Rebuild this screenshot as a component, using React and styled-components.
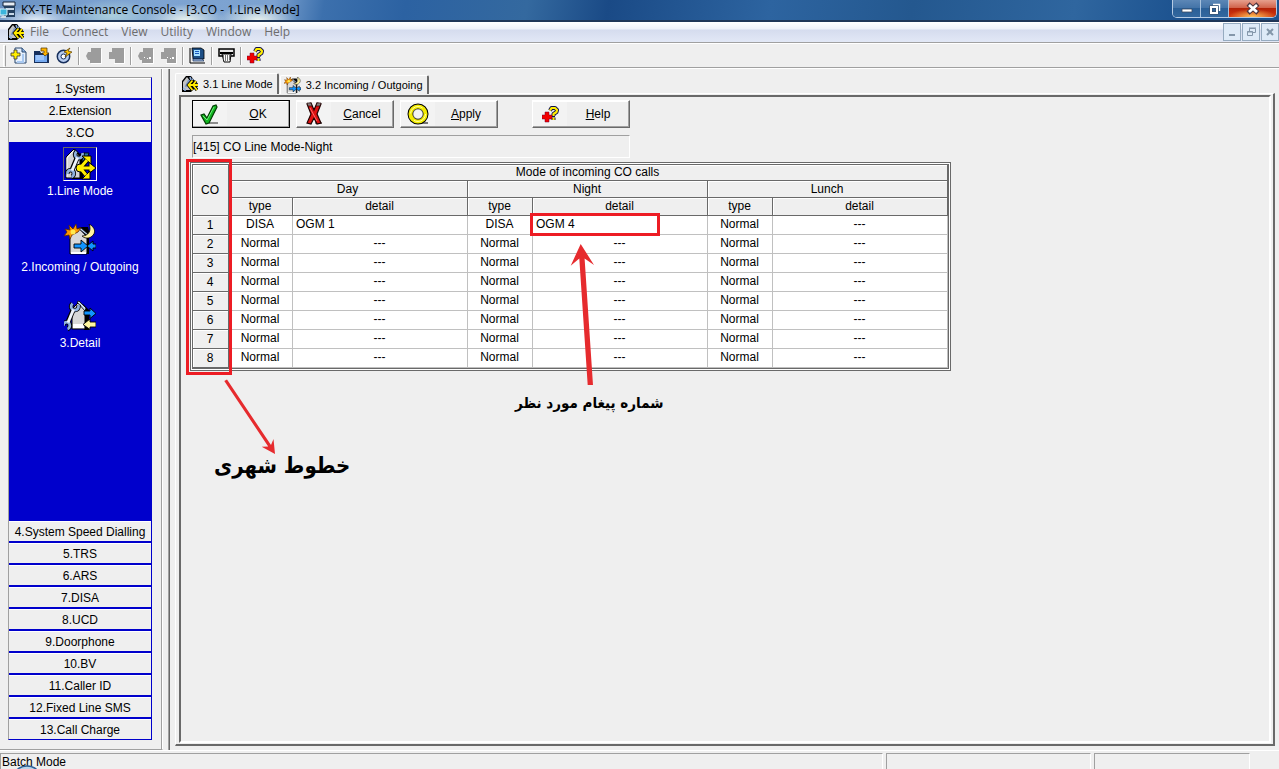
import React from 'react';
import styled, { createGlobalStyle, css } from 'styled-components';

const FACE = '#efefef';
const DARK = '#696969';
const MID = '#a0a0a0';
const BLUE = '#0000cc';
const RED = '#ed1c24';

const Global = createGlobalStyle`
  * { box-sizing: border-box; }
  body { margin: 0; background: ${FACE}; color: #000; font: 12px/16px "Liberation Sans", Arial, sans-serif; }
  button, input { font: inherit; color: inherit; margin: 0; border-radius: 0; }
`;

const Window = styled.div`
  display: flex;
  flex-direction: column;
  height: 100vh;
  overflow: hidden;
`;

/* ---------- title bar ---------- */
const TitleBar = styled.header`
  display: flex;
  align-items: center;
  flex: none;
  height: 22px;
  padding-right: 2px;
  font: 12px/20px "Open Sans", "Noto Sans", sans-serif;
  border-bottom: 2px solid #1f3657;
  background:
    radial-gradient(ellipse 40px 14px at 36px 20px, rgba(240, 246, 252, 0.9), transparent),
    radial-gradient(ellipse 50px 16px at 112px 16px, rgba(190, 225, 225, 0.7), transparent),
    radial-gradient(ellipse 40px 16px at 185px 20px, rgba(244, 250, 240, 0.9), transparent),
    radial-gradient(ellipse 40px 16px at 258px 20px, rgba(244, 250, 240, 0.9), transparent),
    linear-gradient(100deg, #6a92c4 0, #7ea4d2 120px, #7ca2d0 270px, #3c70ad 320px, #2c62a2 400px, #34699f 520px, #1a4a86 600px, #2d64a0 760px, #24588f 900px, #2f669f 1060px, #1d5390 1160px);
`;
const TitleText = styled.h1`
  flex: 1;
  margin: 0 0 0 5px;
  font: inherit;
`;
const Captions = styled.div`
  display: flex;
  align-self: flex-start;
  height: 18px;
  border: 1px solid #b5cbe4;
  border-top: 0;
  border-radius: 0 0 5px 5px;
  overflow: hidden;
`;
const CaptionButton = styled.button`
  display: flex;
  align-items: center;
  justify-content: center;
  width: ${p => (p.$close ? 47 : 28)}px;
  padding: 0;
  border: 0;
  border-right: ${p => (p.$close ? 0 : 1)}px solid #a9c3de;
  background: ${p => (p.$close
    ? 'radial-gradient(ellipse 24px 8px at 50% 100%, #ffc45a, transparent), linear-gradient(#e6a08e, #d1644c 45%, #b32208 50%, #d4380f)'
    : 'linear-gradient(#5c87b6, #4474a8 45%, #2a5f97 50%, #33689f)')};
`;

/* ---------- menu bar ---------- */
const MenuBar = styled.nav`
  display: flex;
  align-items: center;
  flex: none;
  height: 21px;
  padding-left: 7px;
  font: 12px/18px "Open Sans", "Noto Sans", sans-serif;
  color: #6d6d6d;
  border-bottom: 1px solid ${MID};
  background: linear-gradient(#ffffff, #eef1f9 35%, #d5dcee 40%, #e2e8f6);
`;
const MenuItem = styled.button`
  padding: 0 7px 0 6px;
  border: 0;
  background: none;
`;
const MdiButtons = styled.div`
  display: flex;
  gap: 1px;
  margin-left: auto;
`;
const MdiButton = styled.button`
  display: flex;
  align-items: center;
  justify-content: center;
  width: 18px;
  height: 18px;
  padding: 0;
  border: 1px solid #96abc0;
  background: #deeaf7;
`;

/* ---------- tool bar ---------- */
const ToolBar = styled.div`
  display: flex;
  align-items: center;
  flex: none;
  height: 25px;
  border-top: 1px solid #fff;
  border-bottom: 1px solid ${MID};
  box-shadow: 0 1px 0 #fff;
`;
const Grip = styled.span`
  width: 3px;
  height: 22px;
  margin: 0 1px 0 3px;
  border: 1px solid #fff;
  border-right-color: ${MID};
`;
const ToolButton = styled.button`
  display: flex;
  align-items: center;
  justify-content: center;
  width: 23px;
  height: 22px;
  padding: 0;
  border: 0;
  background: none;
`;
const ToolSeparator = styled.span`
  width: 2px;
  height: 18px;
  margin: 0 2px;
  border-left: 1px solid ${MID};
  border-right: 1px solid #fff;
`;

/* ---------- work area ---------- */
const Work = styled.div`
  display: flex;
  flex: 1;
  min-height: 0;
  padding-top: 1px;
`;
const SidePane = styled.aside`
  display: flex;
  flex: none;
  width: 163px;
  padding: 8px 9px 9px 8px;
  border-right: 1px solid #fff;
  border-bottom: 1px solid ${MID};
  box-shadow: inset -1px 0 0 ${MID};
`;
const SideMenu = styled.nav`
  display: flex;
  flex-direction: column;
  width: 144px;
  border: 1px solid ${MID};
  border-right-color: ${BLUE};
  border-bottom-color: ${BLUE};
  background: ${BLUE};
`;
const SideGroup = styled.div`
  display: grid;
  gap: 2px;
`;
const SideButton = styled.button`
  height: 20px;
  padding: 0;
  border: 0;
  border-top: 1px solid #fff;
  white-space: nowrap;
  background: ${FACE};
`;
const SideContent = styled.div`
  display: flex;
  flex-direction: column;
  flex: 1;
  align-items: center;
  gap: 22px;
  padding-top: 5px;
`;
const SideLink = styled.button`
  display: flex;
  flex-direction: column;
  align-items: center;
  padding: 0;
  border: 0;
  line-height: 20px;
  color: #fff;
  background: none;
`;
const IconFrame = styled.span`
  display: flex;
  width: 34px;
  height: 34px;
  border: 1px solid transparent;
  ${p => p.$selected && css`border-color: ${DARK} #fff #fff ${DARK};`}
`;
const Splitter = styled.div`
  flex: none;
  width: 7px;
  border-right: 1px solid ${DARK};
  box-shadow: inset -1px 0 0 ${MID};
`;
const Content = styled.main`
  display: flex;
  flex-direction: column;
  flex: 1;
  min-width: 0;
  padding: 4px 4px 4px 5px;
`;
const Tabs = styled.div`
  display: flex;
  align-items: flex-end;
  gap: 1px;
  margin-bottom: -1px;
`;
const Tab = styled.button`
  position: relative;
  display: flex;
  align-items: center;
  gap: 5px;
  height: ${p => (p.$active ? 21 : 19)}px;
  padding: 0 4px 0 ${p => (p.$active ? 5 : 3)}px;
  font-size: 11px;
  border: 1px solid #fff;
  border-right: 2px solid ${DARK};
  border-bottom: 0;
  border-radius: 2px 2px 0 0;
  background: ${FACE};
  z-index: ${p => (p.$active ? 1 : 0)};
`;
const Raised = styled.section`
  display: flex;
  flex: 1;
  padding: 1px 2px 1px 3px;
  border: 1px solid #fff;
  border-right: 2px solid ${DARK};
  border-bottom: 2px solid ${DARK};
`;
const Sunken = styled.div`
  flex: 1;
  min-width: 0;
  padding: 3px 9px;
  border: 2px solid ${DARK};
  border-right: 2px solid #fff;
  border-bottom: 2px solid #fff;
`;
const Actions = styled.div`
  display: flex;
  gap: 6px;
  padding-left: 2px;
`;
const ActionButton = styled.button`
  display: flex;
  align-items: center;
  width: 98px;
  height: 28px;
  padding: 0;
  border: 1px solid;
  border-color: ${p => (p.$primary ? '#000' : `#fff ${DARK} ${DARK} #fff`)};
  box-shadow: inset -1px -1px 0 ${MID}, inset 1px 1px 0 #fff;
  margin-left: ${p => (p.$apart ? 28 : 0)}px;
  background: ${FACE};
`;
const ActionIcon = styled.span`
  display: flex;
  align-items: center;
  justify-content: center;
  width: 34px;
  height: 24px;
  background: #f3f3f3;
`;
const ActionLabel = styled.span`
  flex: 1;
  text-align: center;
`;
const Caption = styled.input`
  display: block;
  width: 438px;
  height: 23px;
  margin: 7px 0 4px 2px;
  padding: 0;
  border: 1px solid;
  border-color: ${MID} #fff #fff ${MID};
  background: ${FACE};
`;

/* ---------- grid ---------- */
const GridArea = styled.div`
  position: relative;
  width: 761px;
`;
const Grid = styled.table`
  width: 761px;
  table-layout: fixed;
  border-spacing: 0;
  border: 3px double ${DARK};
  background: #fff;
`;
const Head = styled.th`
  height: ${p => p.$height || 17}px;
  padding: 0 1px 0 0;
  font-weight: normal;
  line-height: 15px;
  border-right: 1px solid ${DARK};
  border-bottom: 1px solid ${DARK};
  box-shadow: inset 1px 1px 0 #fff;
  background: ${FACE};
`;
const Cell = styled.td`
  height: 19px;
  padding: 0 4px 2px 3px;
  line-height: 16px;
  text-align: ${p => (p.$left ? 'left' : 'center')};
  border-right: 1px solid #c0c0c0;
  border-bottom: 1px solid #c0c0c0;
`;

/* ---------- annotations laid over the grid ---------- */
const Mark = styled.div`
  position: absolute;
  border: 3px solid ${RED};
  pointer-events: none;
`;
const LinesMark = styled(Mark)`
  left: -4px;
  top: -3px;
  width: 46px;
  height: 216px;
`;
const MessageMark = styled(Mark)`
  left: 340px;
  top: 51px;
  width: 130px;
  height: 23px;
`;
const Arrows = styled.svg`
  position: absolute;
  left: 0;
  top: 0;
  pointer-events: none;
`;
const Note = styled.p`
  position: absolute;
  left: ${p => p.$x}px;
  top: ${p => p.$y}px;
  margin: 0;
  white-space: nowrap;
  font: bold ${p => p.$size}px/32px "DejaVu Sans Condensed", "DejaVu Sans", sans-serif;
`;

/* ---------- status bar ---------- */
const StatusBar = styled.footer`
  position: relative;
  display: flex;
  gap: 3px;
  flex: none;
  height: 19px;
  padding: 2px 29px 0 0;
  border-top: 1px solid #fff;
  overflow: hidden;
`;
const StatusPane = styled.div`
  flex: ${p => (p.$width ? 'none' : 1)};
  width: ${p => p.$width || 0}px;
  height: 20px;
  padding-left: 1px;
  border: 1px solid;
  border-color: ${MID} #fff #fff ${MID};
`;
const Orb = styled.svg`
  position: absolute;
  left: 12px;
  top: 14px;
`;

/* ---------- drawings ---------- */
const Wrench = ({ d }) => (
  <g transform={d} fill="none">
    <g stroke="#000">
      <path d="M13.500 8 7.500 22" strokeWidth="5" />
      <path d="M12.500 2.500c-2.500 2.500-1.500 6 1.500 6.500s5-1.500 4.500-5" strokeWidth="4.500" />
      <path d="M3.500 25c-.5-3 2-4.500 4.500-3.500s2.500 5.500-.5 6.500" strokeWidth="4.500" />
    </g>
    <g stroke="#8fb0df">
      <path d="M12.500 2.500c-2.500 2.500-1.500 6 1.500 6.500s5-1.500 4.500-5" strokeWidth="2.800" />
      <path d="M3.500 25c-.5-3 2-4.500 4.500-3.500s2.500 5.500-.5 6.500" strokeWidth="2.800" />
    </g>
    <path d="M13.500 8.500 8 21.500" stroke="#eef3fc" strokeWidth="3" />
  </g>
);
const LineModeIcon = ({ size = 32 }) => (
  <svg width={size} height={size} viewBox="0 0 32 32">
    <path d="M11 1 19 9v22H9" fill="#000" />
    <path d="M2 9 10 1l6 8v21H2z" fill="#d4d4d4" stroke="#000" />
    <path d="M3 29V10l6-7" stroke="#fff" fill="none" />
    <path d="M19 5l6 0-2 6-5 3z" fill="#2c7a9c" stroke="#000" strokeWidth=".8" />
    <Wrench d="translate(0 1)" />
    <g stroke="#000" strokeWidth="5" fill="none">
      <path d="M16 20h10M17 19l6-7M17 21l5 6" />
    </g>
    <g fill="#ffee00" stroke="#000" strokeWidth="1">
      <path d="M18 8h9v8z" />
      <path d="M25 14.500 32 20l-7 5.500z" />
      <path d="M18 31h8v-8z" />
      <circle cx="16" cy="20" r="4" />
    </g>
    <path d="M16 20h11M17 19l6-7M17 21l5 6" stroke="#ffee00" strokeWidth="3" />
  </svg>
);
const LineModeSmall = () => (
  <svg width="17" height="17" viewBox="0 0 17 17">
    <path d="M1 5 5 0h5l3 4v9l-3 3H1z" fill="#000" />
    <path d="M2 6l4-5 3 4v9H2z" fill="#c4c4c4" />
    <path d="M9 1l1 3 2-1" stroke="#8fb0df" strokeWidth="1.500" fill="none" />
    <path d="M8 4 4.500 11" stroke="#7f9cc8" strokeWidth="2" />
    <path d="M2 12l2 1v2" stroke="#8fb0df" strokeWidth="1.500" fill="none" />
    <g fill="none">
      <path d="M11.500 4.500 7.500 9l4 5M8 9h9M12 9l3-4M12 9l4 5" stroke="#000" strokeWidth="3.400" />
      <path d="M11.500 4.500 7.500 9l4 5M8 9h9M12 9l3-4M12 9l4 5" stroke="#ffe800" strokeWidth="1.800" />
    </g>
  </svg>
);
const InOutIcon = ({ size = 32 }) => (
  <svg width={size} height={size} viewBox="0 0 32 32">
    <path d="M17 3h7l1 4v23h-4V12z" fill="#000" />
    <path d="M6 11 15 4l8 9v17H6z" fill="#d8d8d8" stroke="#000" />
    <path d="M7 29h15" stroke="#fff" strokeWidth="2" />
    <path d="M16 3l8 7 1 3-10-8z" fill="#bcd6f5" stroke="#000" strokeWidth=".8" />
    <path d="M1 5l5 1-1-5 4 4 3-5 1 5 4-1-3 4-6 3-2 4-1-4-5 1 3-4z" fill="#ff9a00" stroke="#5a2800" strokeWidth=".8" />
    <circle cx="9" cy="8" r="2.500" fill="#ffe94d" />
    <path d="M25 0c6 3 8 9 2 13-3 2-7 1-9-1 6 0 10-5 7-12z" fill="#fff3a0" stroke="#000" strokeWidth=".8" />
    <g fill="#1094ff" stroke="#000" strokeWidth=".9">
      <path d="M10 20h7v-4l7 6-7 6v-4h-7z" />
      <path d="M32 20h-3v-3l-6 5 6 5v-3h3z" />
    </g>
  </svg>
);
const DetailIcon = () => (
  <svg width="32" height="32" viewBox="0 0 32 32">
    <path d="M19 4l6 6v20h-5z" fill="#000" />
    <path d="M8 9 14 3l7 7v19H8z" fill="#d8d8d8" stroke="#000" />
    <path d="M9 26h11" stroke="#fff" strokeWidth="4" />
    <path d="M13 2l2-1 7 7-1 3z" fill="#c8dcf5" stroke="#000" strokeWidth=".8" />
    <Wrench d="translate(-4 1)" />
    <path d="M20 11h6V8l6 5.500-6 5V15h-6z" fill="#1094ff" stroke="#000" strokeWidth=".9" />
    <path d="M32 22h-6v-3l-7 5.500 7 5V27h6z" fill="#fff6a0" stroke="#000" strokeWidth=".9" />
  </svg>
);
const AppIcon = () => (
  <svg width="16" height="18" viewBox="0 0 16 18">
    <path d="M3 1h12v4H3z" fill="#e8eef5" stroke="#14243a" />
    <path d="M4 5h11v11H4z" fill="#25405f" />
    <path d="M6 7h8v2H6zM9 12h5v2H9z" fill="#c8d8e8" />
    <path d="M0 8h7v6H0z" fill="#3cb4dc" stroke="#d8f0f8" />
    <path d="M2 15h4v2H0z" fill="#d0dce8" />
  </svg>
);
const NewIcon = () => (
  <svg width="17" height="17" viewBox="0 0 17 17">
    <path d="M5 1h7l4 4v11H5z" fill="#e6f0fc" stroke="#28466e" />
    <path d="M12 1v4h4" fill="#8fb6e6" stroke="#28466e" />
    <path d="M13 7v8H7" fill="none" stroke="#a8c8f0" strokeWidth="2" />
    <path d="M4 3h3v3h3v3H7v3H4V9H1V6h3z" fill="#ffee00" stroke="#333" strokeWidth=".8" />
  </svg>
);
const OpenIcon = () => (
  <svg width="17" height="17" viewBox="0 0 17 17">
    <path d="M1 4h6l1 2h8v10H1z" fill="#18305c" />
    <path d="M2 8h12v7H2z" fill="#76aaf0" />
    <path d="M3 8h8v5H3z" fill="#9cc4fa" />
    <path d="M8 1h6v5h2l-4 3-3-3h2V4H8z" fill="#ffb400" stroke="#4c3000" strokeWidth=".7" />
  </svg>
);
const SaveIcon = () => (
  <svg width="17" height="17" viewBox="0 0 17 17">
    <circle cx="7.500" cy="9.500" r="6.200" fill="#b7ccef" stroke="#18305c" strokeWidth="1.500" />
    <circle cx="7.500" cy="9.500" r="2.500" fill="#fff" stroke="#18305c" />
    <path d="M14 1l-2 3 4 1-7 5 2-4-3-1z" fill="#ffc400" stroke="#553800" strokeWidth=".7" />
  </svg>
);
const GreyIcon = ({ arrow, dots }) => (
  <svg width="17" height="17" viewBox="0 0 17 17">
    <path d={arrow ? 'M6 1h10v15H5v-3H3l-2-4 2-4h3z' : 'M4 1h12v15H7v-4H1V5h3z'} fill="#9c9c9c" />
    {dots && <path d="M7 10h1v1H7zM10 11h1v1h-1zM12 10h2v2h-2z" fill="#fff" />}
    <path d="M16.500 2v14.500H6" stroke="#fff" fill="none" />
  </svg>
);
const ScreenIcon = () => (
  <svg width="17" height="17" viewBox="0 0 17 17">
    <path d="M1 1v15h15" stroke="#000" fill="none" />
    <path d="M3 1h9l3 2v9H4z" fill="#1d4f86" stroke="#000" strokeWidth=".8" />
    <path d="M5 3h6v6H5z" fill="#a6e0ff" />
    <path d="M6 4h4v1H6zM6 6h4v1H6z" fill="#1a5ac0" />
    <path d="M4 12h9l2 2H4z" fill="#9cb4dc" stroke="#18305c" strokeWidth=".7" />
  </svg>
);
const PrintIcon = () => (
  <svg width="17" height="17" viewBox="0 0 17 17">
    <path d="M1 2h15v7H1z" fill="#e9e9e9" stroke="#000" strokeWidth="1.500" />
    <path d="M2 5h13v2H2z" fill="#000" />
    <path d="M4 7h9l-1 8H6z" fill="#fff" stroke="#000" />
    <path d="M5.500 8v5M7.500 8v6M9.500 8v6M11.500 8v5" stroke="#555" strokeWidth=".8" />
  </svg>
);
const HelpIcon = () => (
  <svg width="17" height="17" viewBox="0 0 17 17">
    <g fill="none" strokeLinejoin="round">
      <path d="M8 4.500 9.500 2H13l2 2-.5 2-3 2v2M11.500 11.500v2.500" stroke="#10104c" strokeWidth="4" />
      <path d="M8 4.500 9.500 2H13l2 2-.5 2-3 2v2M11.500 11.500v2.500" stroke="#ffee00" strokeWidth="2.200" />
      <path d="M10 10.500h3" stroke="#10104c" />
    </g>
    <path d="M3 6h4v3h3v4H7v3H3v-3H0V9h3z" fill="#f20000" stroke="#6c0030" strokeWidth=".5" />
  </svg>
);
const CheckIcon = () => (
  <svg width="22" height="24" viewBox="0 0 22 24">
    <path d="M10 20h9v2h-9z" fill="#8c8c8c" />
    <path d="M2 13l3-1 3 4 6-12 3-1 1 2-8 16-3 1z" fill="#12b521" stroke="#003c00" strokeWidth="1.200" />
    <path d="M4 14l4 4L15 5" fill="none" stroke="#6df07a" />
  </svg>
);
const CrossIcon = () => (
  <svg width="22" height="24" viewBox="0 0 22 24">
    <path d="M12 20h7v2h-7z" fill="#8c8c8c" />
    <path d="M4 2l4-1 3 7 3-7 4 1-4 10 4 9-4 1-3-6-3 6-4-1 4-9z" fill="#e01010" stroke="#200000" strokeWidth="1.200" />
    <path d="M4 1h4l1 3H5zM14 1h4l-1 3h-4z" fill="#8a8080" stroke="#200000" strokeWidth=".6" />
    <path d="M7 6l7 13" stroke="#ff6868" />
  </svg>
);
const RingIcon = () => (
  <svg width="22" height="24" viewBox="0 0 22 24">
    <path d="M13 20h8v2h-8z" fill="#777" />
    <circle cx="11" cy="12" r="7.500" fill="none" stroke="#000" strokeWidth="6" />
    <circle cx="11" cy="12" r="7.500" fill="none" stroke="#f4ec00" strokeWidth="4" />
    <circle cx="11" cy="12" r="7.500" fill="none" stroke="#ffffa0" strokeWidth="1" strokeDasharray="16 8" />
    <circle cx="11" cy="12" r="5" fill="#f3f3f3" stroke="#555" strokeWidth=".7" />
  </svg>
);

const toolGroups = [
  [['New', <NewIcon />], ['Open', <OpenIcon />], ['Save', <SaveIcon />]],
  [['Upload', <GreyIcon arrow />], ['Download', <GreyIcon />]],
  [['Upload part', <GreyIcon arrow dots />], ['Download part', <GreyIcon dots />]],
  [['Screen', <ScreenIcon />]],
  [['Print', <PrintIcon />]],
  [['Help', <HelpIcon />]],
];
const menus = ['File', 'Connect', 'View', 'Utility', 'Window', 'Help'];
const upper = ['1.System', '2.Extension', '3.CO'];
const lower = ['4.System Speed Dialling', '5.TRS', '6.ARS', '7.DISA', '8.UCD', '9.Doorphone', '10.BV', '11.Caller ID', '12.Fixed Line SMS', '13.Call Charge'];
const periods = ['Day', 'Night', 'Lunch'];
const lines = [
  [['DISA', 'OGM 1'], ['DISA', 'OGM 4'], ['Normal', '---']],
  ...Array.from({ length: 7 }, () => periods.map(() => ['Normal', '---'])),
];

export default function App() {
  return (
    <Window>
      <Global />
      <TitleBar>
        <AppIcon />
        <TitleText>KX-TE Maintenance Console - [3.CO - 1.Line Mode]</TitleText>
        <Captions>
          <CaptionButton aria-label="Minimize">
            <svg width="14" height="12" viewBox="0 0 14 12"><path d="M2 6h10v3H2z" fill="#fff" stroke="#3b4a60" strokeWidth=".8" /></svg>
          </CaptionButton>
          <CaptionButton aria-label="Restore">
            <svg width="14" height="14" viewBox="0 0 14 14">
              <path d="M5 2.500h6.500V9" fill="none" stroke="#fff" strokeWidth="1.500" />
              <path d="M3 5h6v6H3z" fill="none" stroke="#3b4a60" strokeWidth="3" />
              <path d="M3 5h6v6H3z" fill="none" stroke="#fff" strokeWidth="2" />
            </svg>
          </CaptionButton>
          <CaptionButton $close aria-label="Close">
            <svg width="14" height="13" viewBox="0 0 14 13">
              <path d="M2 2l10 9M12 2 2 11" stroke="#4b3540" strokeWidth="4.500" />
              <path d="M3 3l8 7M11 3l-8 7" stroke="#fff" strokeWidth="2.800" />
            </svg>
          </CaptionButton>
        </Captions>
      </TitleBar>

      <MenuBar>
        <LineModeSmall />
        {menus.map(m => <MenuItem key={m}>{m}</MenuItem>)}
        <MdiButtons>
          <MdiButton aria-label="Minimize document">
            <svg width="10" height="10"><path d="M2 7h6v2H2z" fill="#8497aa" /></svg>
          </MdiButton>
          <MdiButton aria-label="Restore document">
            <svg width="10" height="10" fill="none" stroke="#8497aa"><path d="M3.500 4V1.500h6v4H7M3 1h7M1.500 4.500h5v4h-5zM1 5h6" /></svg>
          </MdiButton>
          <MdiButton aria-label="Close document">
            <svg width="10" height="10"><path d="M2 2l6 6M8 2 2 8" stroke="#8497aa" strokeWidth="2" /></svg>
          </MdiButton>
        </MdiButtons>
      </MenuBar>

      <ToolBar>
        <Grip />
        {toolGroups.map((group, i) => (
          <React.Fragment key={i}>
            {i > 0 && <ToolSeparator />}
            {group.map(([label, icon]) => <ToolButton key={label} aria-label={label}>{icon}</ToolButton>)}
          </React.Fragment>
        ))}
      </ToolBar>

      <Work>
        <SidePane>
          <SideMenu>
            <SideGroup>{upper.map(t => <SideButton key={t}>{t}</SideButton>)}</SideGroup>
            <SideContent>
              <SideLink><IconFrame $selected><LineModeIcon /></IconFrame>1.Line Mode</SideLink>
              <SideLink><IconFrame><InOutIcon /></IconFrame>2.Incoming / Outgoing</SideLink>
              <SideLink><IconFrame><DetailIcon /></IconFrame>3.Detail</SideLink>
            </SideContent>
            <SideGroup>{lower.map(t => <SideButton key={t}>{t}</SideButton>)}</SideGroup>
          </SideMenu>
        </SidePane>
        <Splitter />

        <Content>
          <Tabs role="tablist">
            <Tab role="tab" aria-selected="true" $active><LineModeSmall />3.1 Line Mode</Tab>
            <Tab role="tab" aria-selected="false"><InOutIcon size={17} />3.2 Incoming / Outgoing</Tab>
          </Tabs>
          <Raised>
            <Sunken>
              <Actions>
                <ActionButton $primary><ActionIcon><CheckIcon /></ActionIcon><ActionLabel><u>O</u>K</ActionLabel></ActionButton>
                <ActionButton><ActionIcon><CrossIcon /></ActionIcon><ActionLabel><u>C</u>ancel</ActionLabel></ActionButton>
                <ActionButton><ActionIcon><RingIcon /></ActionIcon><ActionLabel><u>A</u>pply</ActionLabel></ActionButton>
                <ActionButton $apart><ActionIcon><HelpIcon /></ActionIcon><ActionLabel><u>H</u>elp</ActionLabel></ActionButton>
              </Actions>
              <Caption aria-label="Current setting" readOnly value="[415] CO Line Mode-Night" />
              <GridArea>
                <Grid>
                  <colgroup>
                    <col width="36" />
                    <col width="64" /><col width="175" />
                    <col width="65" /><col width="175" />
                    <col width="65" /><col width="175" />
                  </colgroup>
                  <thead>
                    <tr>
                      <Head rowSpan={3}>CO</Head>
                      <Head colSpan={6} $height={16}>Mode of incoming CO calls</Head>
                    </tr>
                    <tr>{periods.map(p => <Head key={p} colSpan={2}>{p}</Head>)}</tr>
                    <tr>
                      {periods.map(p => (
                        <React.Fragment key={p}>
                          <Head $height={18}>type</Head>
                          <Head $height={18}>detail</Head>
                        </React.Fragment>
                      ))}
                    </tr>
                  </thead>
                  <tbody>
                    {lines.map((row, i) => (
                      <tr key={i}>
                        <Head $height={19}>{i + 1}</Head>
                        {row.map(([type, detail], j) => (
                          <React.Fragment key={j}>
                            <Cell>{type}</Cell>
                            <Cell $left={detail !== '---'}>{detail}</Cell>
                          </React.Fragment>
                        ))}
                      </tr>
                    ))}
                  </tbody>
                </Grid>
                <LinesMark />
                <MessageMark />
                <Arrows width="480" height="300" viewBox="190 162 480 300" fill="#e62b2e">
                  <path d="M580.700 244 594 265l-9.400-6.500L593 385h-5.300l-8.400-126.500-8.600 7.200z" />
                  <path d="M227 379.500 271 445l2.500-6 1.500 15-13.300-7.300 6.500-.2L224.300 381z" />
                </Arrows>
                <Note dir="rtl" lang="fa" $x={325} $y={225} $size={15}>شماره پیغام مورد نظر</Note>
                <Note dir="rtl" lang="fa" $x={24} $y={288} $size={22}>خطوط شهری</Note>
              </GridArea>
            </Sunken>
          </Raised>
        </Content>
      </Work>

      <StatusBar>
        <StatusPane>Batch Mode</StatusPane>
        <StatusPane $width={205} />
        <StatusPane $width={156} />
        <Orb width="30" height="6" viewBox="0 0 30 6">
          <circle cx="15" cy="16" r="15" fill="#b9d4ea" stroke="#2c5f96" strokeWidth="1.500" />
        </Orb>
      </StatusBar>
    </Window>
  );
}
